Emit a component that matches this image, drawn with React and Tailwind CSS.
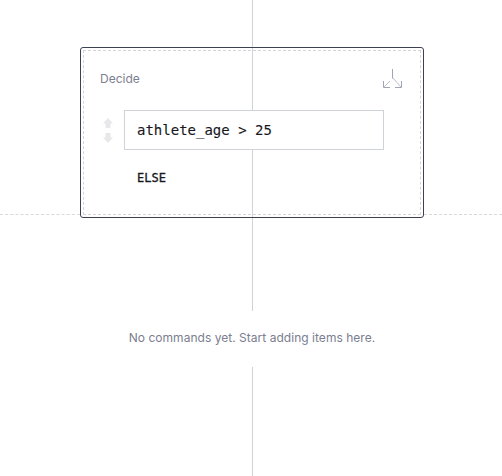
import React from "react";

const FONT_SANS = { fontFamily: "Inter, sans-serif" };
const FONT_MONO = { fontFamily: '"DejaVu Sans Mono", monospace' };

const BranchIcon = () => (
  <svg width="22" height="22" viewBox="0 0 22 22" fill="none" stroke="#a1a5b2" strokeWidth="1">
    <path d="M10.5 0V9.5" />
    <path d="M8 12L2 18" stroke="#bcbfc9" />
    <path d="M11 9L19 18" stroke="#bcbfc9" />
    <path d="M1.5 12V18.5H8" />
    <path d="M19.5 12V18.5H13" />
  </svg>
);

const SortArrows = () => (
  <div className="flex flex-col items-center gap-[5px] w-[10px]">
    <svg width="10" height="10" viewBox="0 0 10 10" fill="#e8e8ea">
      <path d="M5 0L10 5.5H7.5V10H2.5V5.5H0Z" />
    </svg>
    <svg width="10" height="10" viewBox="0 0 10 10" fill="#e8e8ea">
      <path d="M5 10L10 4.5H7.5V0H2.5V4.5H0Z" />
    </svg>
  </div>
);

const App = () => {
  return (
    <div className="relative w-[502px] h-[476px] bg-white overflow-hidden" style={FONT_SANS}>
      {/* Connector lines behind the card */}
      <div className="absolute left-[252px] top-0 w-px h-[311px] bg-[#d0d2da]" />
      <div className="absolute left-[252px] top-[367px] w-px h-[109px] bg-[#d0d2da]" />
      <div className="absolute left-0 w-[80px] top-[214px] border-t border-dashed border-[#d9d9d9]" />
      <div className="absolute left-[424px] right-0 top-[214px] border-t border-dashed border-[#d9d9d9]" />

      <div className="relative pt-[47px]">
        {/* Decide card */}
        <div className="relative ml-[80px] w-[344px] h-[171px] border border-[#3c4250] rounded-[3px] p-[2px]">
          <div className="h-full border border-dashed border-[#d4d4d8]">
            <div className="flex items-start justify-between pl-[16px] pr-[16px] pt-[20px]">
              <span className="text-xs leading-[16px] text-[#7b8090]">Decide</span>
              <div className="mt-[-2px]">
                <BranchIcon />
              </div>
            </div>
            <div className="flex items-center mt-[19px] pl-[19px]">
              <SortArrows />
              <div className="ml-[11px] w-[260px] h-[40px] bg-white border border-[#d0d2da] flex items-center pl-[12px]">
                <span className="text-sm text-[#16181d] [-webkit-text-stroke:0.1px_#16181d]" style={FONT_MONO}>
                  athlete_age &gt; 25
                </span>
              </div>
            </div>
            <div
              className="mt-[20px] ml-[53px] text-xs leading-[16px] text-[#16181d] [-webkit-text-stroke:0.3px_#16181d]"
              style={FONT_MONO}
            >
              ELSE
            </div>
          </div>
        </div>

        {/* Empty state */}
        <p className="mt-[112px] pl-[2px] text-center text-xs leading-[16px] tracking-[0.03px] text-[#7a7e8f]">
          No commands yet. Start adding items here.
        </p>
      </div>
    </div>
  );
};

export default App;
